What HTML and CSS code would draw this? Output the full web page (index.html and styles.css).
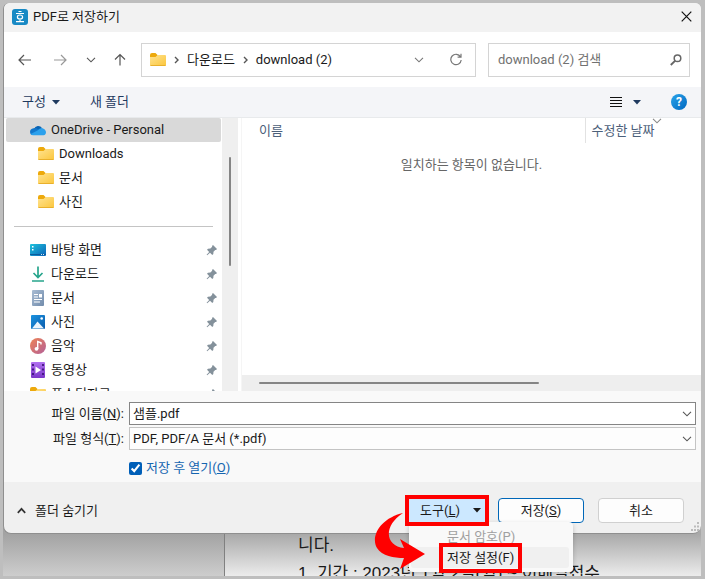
FILE: index.html
```html
<!DOCTYPE html>
<html lang="ko">
<head>
    <meta charset="UTF-8">
    <meta name="viewport" content="width=device-width, initial-scale=1.0">
    <title>PDF로 저장하기</title>
    <link rel="stylesheet" href="styles.css">
</head>
<body>
    <!-- shared icons -->
    <svg class="sprite" aria-hidden="true">
        <defs>
            <linearGradient id="folderFill" x1="0" y1="0" x2="1" y2="1">
                <stop offset="0" stop-color="#ffe391"/>
                <stop offset="1" stop-color="#fbc63c"/>
            </linearGradient>
            <linearGradient id="deskFill" x1="0" y1="0" x2="1" y2="1">
                <stop offset="0" stop-color="#1fc3dc"/>
                <stop offset="1" stop-color="#0b63b8"/>
            </linearGradient>
            <linearGradient id="docFill" x1="0" y1="0" x2="1" y2="1">
                <stop offset="0" stop-color="#a9bdd4"/>
                <stop offset="1" stop-color="#718bab"/>
            </linearGradient>
            <linearGradient id="picFill" x1="0" y1="0" x2="1" y2="1">
                <stop offset="0" stop-color="#1b93e0"/>
                <stop offset="1" stop-color="#0a5cad"/>
            </linearGradient>
            <linearGradient id="musicFill" x1="0" y1="0" x2="1" y2="1">
                <stop offset="0" stop-color="#ef8354"/>
                <stop offset="1" stop-color="#b26099"/>
            </linearGradient>
            <linearGradient id="videoFill" x1="0" y1="0" x2="0" y2="1">
                <stop offset="0" stop-color="#b070f0"/>
                <stop offset="1" stop-color="#7a35c8"/>
            </linearGradient>
        </defs>
        <symbol id="folder" viewBox="0 0 16 16">
            <path d="M0 3q0-2 2-2h3.500l2.500 2.500H0z M0 3h8L6 5.500H0z" fill="#eda90c"/>
            <path d="M0 5h5.500L8 3h7q1 0 1 1v9q0 1-1 1H1q-1 0-1-1z" fill="url(#folderFill)"/>
            <path d="M.5 13.500h15" stroke="#e9b02c"/>
        </symbol>
        <symbol id="pin" viewBox="0 0 12 12">
            <path d="M7 1l4 4-1 1-.8-.1L7.500 7.800 7.300 10 6.300 11 4 8.700 1.200 11.200.6 10.800 3.200 7.900 1 5.700l1-1 2.400-.2L6.200 2.800 6 2z" fill="#84919b"/>
        </symbol>
        <symbol id="chevron" viewBox="0 0 10 6">
            <path d="M1 .800l4 4 4-4" fill="none" stroke="currentColor" stroke-width="1.100"/>
        </symbol>
        <symbol id="caret" viewBox="0 0 8 5">
            <path d="M0 0h8L4 4.600z" fill="currentColor"/>
        </symbol>
        <symbol id="crumb" viewBox="0 0 5 8">
            <path d="M1 1l3 3-3 3" fill="none" stroke="#555" stroke-width="1.400"/>
        </symbol>
    </svg>

    <div class="dialog" role="dialog" aria-labelledby="dialog-title">
        <header class="titlebar">
            <svg class="app-icon" viewBox="0 0 16 16">
                <rect width="16" height="16" rx="3" fill="#1889c4"/>
                <path d="M6.500 2.500h3M4 4.500h8M4 12.600h8M8 10.500v2" stroke="#fff" stroke-width="1.200"/>
                <ellipse cx="8" cy="8" rx="2.600" ry="2" fill="none" stroke="#fff" stroke-width="1.200"/>
            </svg>
            <h1 id="dialog-title">PDF로 저장하기</h1>
            <button type="button" class="close" aria-label="닫기">
                <svg width="11" height="11" viewBox="0 0 11 11"><path d="M.7.7l9.600 9.600M10.300.7L.7 10.300" stroke="#111" stroke-width="1.200"/></svg>
            </button>
        </header>

        <nav class="navbar">
            <div class="nav-buttons">
                <button type="button" aria-label="뒤로"><svg width="14" height="12" viewBox="0 0 14 12"><path d="M13 6H1.500M6 1L1 6l5 5" fill="none" stroke="#555" stroke-width="1.200"/></svg></button>
                <button type="button" aria-label="앞으로"><svg width="14" height="12" viewBox="0 0 14 12"><path d="M1 6h11.500M8 1l5 5-5 5" fill="none" stroke="#999" stroke-width="1.200"/></svg></button>
                <button type="button" class="recent" aria-label="최근 위치"><svg width="10" height="6"><use href="#chevron"/></svg></button>
                <button type="button" aria-label="위로"><svg width="12" height="13" viewBox="0 0 12 13"><path d="M6 12.500V1.500M1 6.500l5-5 5 5" fill="none" stroke="#555" stroke-width="1.200"/></svg></button>
            </div>
            <div class="address">
                <svg class="icon" width="16" height="16"><use href="#folder"/></svg>
                <svg width="5" height="8"><use href="#crumb"/></svg>
                <a href="#">다운로드</a>
                <svg width="5" height="8"><use href="#crumb"/></svg>
                <a href="#">download (2)</a>
                <button type="button" class="history" aria-label="이전 위치"><svg width="10" height="6"><use href="#chevron"/></svg></button>
                <button type="button" aria-label="새로 고침"><svg width="12" height="13" viewBox="0 0 12 13"><path d="M10.500 3.800A5.200 5.200 0 1 0 11.200 7M11 .8v3.400H7.600" fill="none" stroke="#777" stroke-width="1.200"/></svg></button>
            </div>
            <label class="search">
                <input type="text" placeholder="download (2) 검색" aria-label="download (2) 검색">
                <svg width="12" height="12" viewBox="0 0 12 12"><circle cx="7.500" cy="4.300" r="3.300" fill="none" stroke="#666" stroke-width="1.500"/><path d="M5 6.900L.8 11" stroke="#666" stroke-width="1.900"/></svg>
            </label>
        </nav>

        <div class="toolbar">
            <button type="button" class="organize">구성 <svg width="8" height="5"><use href="#caret"/></svg></button>
            <button type="button">새 폴더</button>
            <button type="button" class="view" aria-label="보기">
                <svg width="12" height="11" viewBox="0 0 12 11"><path d="M0 .5h12M0 3.500h12M0 6.500h12M0 9.500h12" stroke="#111"/></svg>
                <svg width="8" height="5"><use href="#caret"/></svg>
            </button>
            <button type="button" class="help" aria-label="도움말">?</button>
        </div>

        <div class="browser">
            <div class="sidebar">
                <ul class="tree">
                    <li class="selected">
                        <svg class="icon" width="16" height="16" viewBox="0 0 16 16"><path d="M4 7a4.500 4.500 0 0 1 8-1l-3 4H1z" fill="#0a64b4"/><path d="M3.500 6.300Q6 5.600 8 7.300l3 2L2 13Q0 12.500 0 10q0-3 3.500-3.700z" fill="#1277cc"/><path d="M7.500 8.500Q9 6 12 6q3.500 1 4 4 0 3-2.500 3.200H3q-1.500 0-2.300-1.200z" fill="#2ba0ec"/></svg>
                        <span>OneDrive - Personal</span>
                    </li>
                    <li class="child"><svg class="icon" width="16" height="16"><use href="#folder"/></svg><span>Downloads</span></li>
                    <li class="child"><svg class="icon" width="16" height="16"><use href="#folder"/></svg><span>문서</span></li>
                    <li class="child"><svg class="icon" width="16" height="16"><use href="#folder"/></svg><span>사진</span></li>
                </ul>
                <hr>
                <ul class="tree">
                    <li>
                        <svg class="icon" width="16" height="16" viewBox="0 0 16 16"><rect y="2" width="16" height="12" rx="1" fill="url(#deskFill)"/><path d="M2 4h1.500v1.500H2zM2 7h1.500v1.500H2z" fill="#fff"/><path d="M0 12.500h16" stroke="#0b5c9c"/><path d="M11 12.500h4" stroke="#cfe9f7" stroke-dasharray="1"/></svg>
                        <span>바탕 화면</span><svg class="pin" width="12" height="12"><use href="#pin"/></svg>
                    </li>
                    <li>
                        <svg class="icon" width="16" height="16" viewBox="0 0 16 16"><path d="M8 .500v11M3.500 7L8 11.500 12.500 7M2 15h12" fill="none" stroke="#27a58c" stroke-width="1.700"/></svg>
                        <span>다운로드</span><svg class="pin" width="12" height="12"><use href="#pin"/></svg>
                    </li>
                    <li>
                        <svg class="icon" width="16" height="16" viewBox="0 0 16 16"><rect x="2" width="12" height="16" rx="1" fill="url(#docFill)"/><path d="M4 4.500h4M4 7h4M4 9.500h8M4 12h6" stroke="#fff" stroke-width="1.200"/><path d="M9 4h3v3.500H9z" fill="#fff"/></svg>
                        <span>문서</span><svg class="pin" width="12" height="12"><use href="#pin"/></svg>
                    </li>
                    <li>
                        <svg class="icon" width="16" height="16" viewBox="0 0 16 16"><rect x="1" y="1" width="14" height="14" rx="1" fill="url(#picFill)"/><path d="M2 14.500L7.500 7.500 14 14.500z" fill="#eaf5fd"/><circle cx="11.700" cy="4.500" r="1.300" fill="#fff"/></svg>
                        <span>사진</span><svg class="pin" width="12" height="12"><use href="#pin"/></svg>
                    </li>
                    <li>
                        <svg class="icon" width="16" height="16" viewBox="0 0 16 16"><circle cx="8" cy="8" r="8" fill="url(#musicFill)"/><circle cx="6.500" cy="10.800" r="1.900" fill="#fff"/><path d="M7.700 11V3.500l3.300 1.300v1.600" fill="none" stroke="#fff" stroke-width="1.400"/></svg>
                        <span>음악</span><svg class="pin" width="12" height="12"><use href="#pin"/></svg>
                    </li>
                    <li>
                        <svg class="icon" width="16" height="16" viewBox="0 0 16 16"><rect x="1" width="14" height="16" rx="1" fill="url(#videoFill)"/><path d="M3 2v12M13 2v12" stroke="#41157c" stroke-width="1.800" stroke-dasharray="2 2.500"/><path d="M5.500 4.500l5.500 3.500-5.500 3.500z" fill="#fff"/></svg>
                        <span>동영상</span><svg class="pin" width="12" height="12"><use href="#pin"/></svg>
                    </li>
                    <li>
                        <svg class="icon" width="16" height="16"><use href="#folder"/></svg>
                        <span>포스팅자료</span><svg class="pin" width="12" height="12"><use href="#pin"/></svg>
                    </li>
                </ul>
            </div>
            <div class="scroll-y"><i></i></div>

            <div class="files">
                <table>
                    <thead>
                        <tr>
                            <th class="col-name">이름</th>
                            <th class="col-date">수정한 날짜<svg class="sort" width="10" height="6"><use href="#chevron"/></svg></th>
                        </tr>
                    </thead>
                    <tbody>
                        <tr><td colspan="2">일치하는 항목이 없습니다.</td></tr>
                    </tbody>
                </table>
                <div class="scroll-x"><i></i></div>
            </div>
        </div>

        <form id="saveForm" class="fields">
            <label for="file-name">파일 이름(<u>N</u>):</label>
            <div class="combo active">
                <input type="text" id="file-name" value="샘플.pdf">
                <svg width="10" height="6"><use href="#chevron"/></svg>
            </div>
            <label for="file-type">파일 형식(<u>T</u>):</label>
            <div class="combo">
                <select id="file-type"><option>PDF, PDF/A 문서 (*.pdf)</option></select>
                <svg width="10" height="6"><use href="#chevron"/></svg>
            </div>
            <div class="open-after">
                <input type="checkbox" id="open-after" checked>
                <label for="open-after">저장 후 열기(<u>O</u>)</label>
            </div>
        </form>

        <footer class="actions">
            <button type="button" class="hide-folders">
                <svg width="9" height="7" viewBox="0 0 9 7"><path d="M.8 5.800l3.700-4 3.700 4" fill="none" stroke="#333" stroke-width="1.700"/></svg>
                폴더 숨기기
            </button>
            <div class="tools">
                <div class="mark">
                    <button type="button" class="tools-button"><span>도구(<u>L</u>)</span><svg width="8" height="5"><use href="#caret"/></svg></button>
                </div>
                <div class="menu" role="menu">
                    <button type="button" role="menuitem" disabled>문서 암호(P)</button>
                    <button type="button" role="menuitem" class="current"><span class="mark">저장 설정(F)</span></button>
                </div>
                <svg class="arrow" width="52" height="58" viewBox="0 0 52 58">
                    <path d="M29 1C7 6-4 24 3 36c5 8 17 10 27 10l-4 11 25-15-25-15 4 9C12 34 8 15 29 1z" fill="#f00"/>
                </svg>
            </div>
            <button type="submit" form="saveForm" class="button primary"><span>저장(<u>S</u>)</span></button>
            <button type="button" class="button">취소</button>
            <svg class="grip" width="10" height="10" viewBox="0 0 10 10"><path d="M7 1h2M4 4.500h2M7 4.500h2M1 8h2M4 8h2M7 8h2" stroke="#bbb" stroke-width="2"/></svg>
        </footer>
    </div>

    <div class="backdrop">
        <div class="paper">
            <p>니다.</p>
            <p>1. 기간 : 2023년 1월 2일(월) ~ 이메일접수</p>
        </div>
    </div>
</body>
</html>
```
FILE: styles.css
```css
* {
    box-sizing: border-box;
}
body {
    margin: 0;
    padding: 3px;
    height: 100vh;
    display: flex;
    flex-direction: column;
    overflow: hidden;
    background: #bebebe;
    color: #1a1a1a;
    font-family: Roboto, "Noto Sans CJK KR", sans-serif;
    font-size: 13px;
    line-height: 20px;
}
button, input, select {
    margin: 0;
    padding: 0;
    border: 0;
    background: none;
    color: inherit;
    font: inherit;
}
button {
    display: flex;
    align-items: center;
    justify-content: center;
    white-space: nowrap;
}
a {
    color: inherit;
    text-decoration: none;
}
svg {
    flex: none;
}
.sprite {
    position: absolute;
    width: 0;
    height: 0;
}

/* dialog */
.dialog {
    position: relative;
    z-index: 1;
    flex: none;
    margin-right: 1px;
    border-left: 1px solid #8f8f8f;
    border-bottom: 1px solid #8f8f8f;
    border-radius: 6px 6px 8px 8px;
    background: #f0f0f0;
}
.titlebar {
    display: flex;
    align-items: center;
    height: 29px;
    padding: 0 9px 2px 8px;
    border-radius: 6px 6px 0 0;
    background: #f2f2f2;
}
.app-icon {
    width: 16px;
    height: 16px;
    margin-right: 5px;
}
.titlebar h1 {
    flex: 1;
    margin: 0;
    font-size: 13px;
    font-weight: normal;
}

/* address and search */
.navbar {
    display: flex;
    align-items: center;
    height: 55px;
    padding-right: 11px;
    background: #fff;
}
.nav-buttons {
    display: flex;
    align-items: center;
    gap: 21px;
    width: 137px;
    padding-left: 14px;
    color: #555;
}
.nav-buttons .recent {
    margin-right: -3px;
    margin-left: -2px;
}
.address, .search {
    display: flex;
    align-items: center;
    height: 34px;
    border: 1px solid #d4d4d4;
    background: #fff;
}
.address {
    flex: 1;
    gap: 8px;
    padding: 0 13px 0 8px;
}
.address .history {
    margin-right: 18px;
    margin-left: auto;
    color: #777;
}
.search {
    width: 202px;
    margin-left: 12px;
    padding: 0 7px 0 9px;
}
.search input {
    flex: 1;
    min-width: 0;
}
.search input::placeholder {
    color: #717171;
}

/* toolbar */
.toolbar {
    display: flex;
    align-items: center;
    height: 31px;
    padding: 0 14px 0 18px;
    border-bottom: 1px solid #e8eaec;
    background: #f4f5f8;
    color: #1f3a5f;
}
.organize {
    gap: 6px;
    margin-right: 30px;
}
.view {
    gap: 11px;
    margin-right: 30px;
    margin-left: auto;
}
.help {
    width: 16px;
    height: 16px;
    border-radius: 50%;
    background: linear-gradient(135deg, #2aa4ea, #0067c0);
    color: #fff;
    font-size: 12px;
    font-weight: bold;
    line-height: 16px;
}

/* folder tree and file list */
.browser {
    display: flex;
    height: 273px;
    background: #fff;
}
.sidebar {
    width: 218px;
    padding: 0 1px 0 2px;
    overflow: hidden;
}
.tree {
    margin: 0;
    padding: 0;
    list-style: none;
}
.tree li {
    display: flex;
    align-items: center;
    gap: 5px;
    height: 24px;
    padding: 0 3px 0 24px;
}
.tree .selected {
    border-radius: 2px;
    background: #d9d9d9;
}
.tree .child {
    padding-left: 32px;
}
.tree .pin {
    margin-left: auto;
}
.sidebar hr {
    height: 1px;
    margin: 12px 8px 11px;
    border: 0;
    background: #c4c4c4;
}
.scroll-y {
    width: 16px;
    padding: 39px 7px 0;
    background: #efefef;
}
.scroll-y i {
    display: block;
    height: 109px;
    border-radius: 1px;
    background: #858585;
}
.files {
    flex: 1;
    display: flex;
    flex-direction: column;
    justify-content: space-between;
    margin-left: 3px;
    border-left: 1px solid #f5f5f5;
}
.files table {
    width: 100%;
    border-collapse: collapse;
    table-layout: fixed;
}
.files th {
    height: 25px;
    padding: 0;
    color: #4c607a;
    font-weight: normal;
    text-align: left;
}
.files .col-name {
    padding-left: 17px;
}
.files .col-date {
    position: relative;
    width: 116px;
    padding-left: 6px;
    border-left: 1px solid #e2e2e2;
}
.sort {
    position: absolute;
    top: 0;
    right: 39px;
    color: #888;
}
.files td {
    height: 44px;
    padding: 0;
    color: #666;
    text-align: center;
}
.scroll-x {
    height: 16px;
    padding: 7px 162px 7px 17px;
    background: #eee;
}
.scroll-x i {
    display: block;
    height: 2px;
    border-radius: 1px;
    background: #858585;
}

/* file name and type */
.fields {
    display: grid;
    grid-template-columns: 120px 1fr;
    align-items: center;
    column-gap: 5px;
    row-gap: 2px;
    padding: 11px 5px 2px 0;
    background: #f9f9f9;
}
.fields > label {
    text-align: right;
}
.combo {
    display: flex;
    align-items: center;
    height: 23px;
    padding: 0 3px;
    border: 1px solid #c4c4c4;
    background: #fdfdfd;
    color: #555;
}
.combo.active {
    border-color: #858585;
    background: #fff;
}
.combo input, .combo select {
    flex: 1;
    min-width: 0;
    height: 20px;
    appearance: none;
    color: #1a1a1a;
}
.open-after {
    grid-column: 2;
    display: flex;
    align-items: center;
    gap: 4px;
    height: 24px;
    margin-top: 4px;
    color: #1565b0;
}
.open-after input {
    width: 13px;
    height: 13px;
    accent-color: #005fb8;
}

/* footer */
.actions {
    display: flex;
    align-items: center;
    height: 51px;
    padding: 6px 17px 0 13px;
    border-radius: 0 0 8px 8px;
}
.hide-folders {
    gap: 9px;
    margin-right: auto;
}
.button {
    width: 86px;
    height: 25px;
    border: 1px solid #d0d0d0;
    border-radius: 4px;
    background: #fdfdfd;
}
.button + .button {
    margin-left: 14px;
}
.button.primary {
    border-color: #0067b8;
}
.mark {
    border: 4px solid #f00;
}
.tools {
    position: relative;
    margin-right: 9px;
}
.tools .mark {
    position: relative;
    z-index: 1;
}
.tools-button {
    justify-content: space-between;
    width: 76px;
    height: 23px;
    padding: 0 4px 0 11px;
    background: #cce8ff;
}
.menu {
    position: absolute;
    top: 27px;
    left: 4px;
    width: 164px;
    height: 50px;
    padding: 4px 4px 4px 2px;
    border-radius: 4px;
    background: #f9f9f9;
    box-shadow: 0 2px 5px rgba(0, 0, 0, 0.2);
}
.menu button {
    justify-content: flex-start;
    width: 100%;
    height: 21px;
    padding-left: 28px;
}
.menu button:disabled {
    padding-left: 36px;
    color: #a0a0a0;
}
.menu .current {
    border-radius: 3px;
    background: #f0f0f0;
}
.menu .mark {
    width: 83px;
    padding: 1px 4px;
}
.arrow {
    position: absolute;
    top: 17px;
    left: -31px;
    z-index: 2;
}
.grip {
    position: absolute;
    right: 1px;
    bottom: 1px;
}

/* document window behind the dialog */
.backdrop {
    flex: 1;
    min-height: 0;
    margin-top: -8px;
    margin-right: 1px;
    padding-left: 221px;
    overflow: hidden;
    background: linear-gradient(#a3a3a3 8px, #cdcdcd);
}
.paper {
    height: 100%;
    padding: 6px 0 0 73px;
    border-left: 1px solid #808080;
    background: linear-gradient(#a9a9a9 8px, #ececec);
}
.paper p {
    margin: 0;
    font-family: "Liberation Sans", "Noto Sans CJK KR", sans-serif;
    font-size: 17px;
    line-height: 28px;
    white-space: pre;
}
```
